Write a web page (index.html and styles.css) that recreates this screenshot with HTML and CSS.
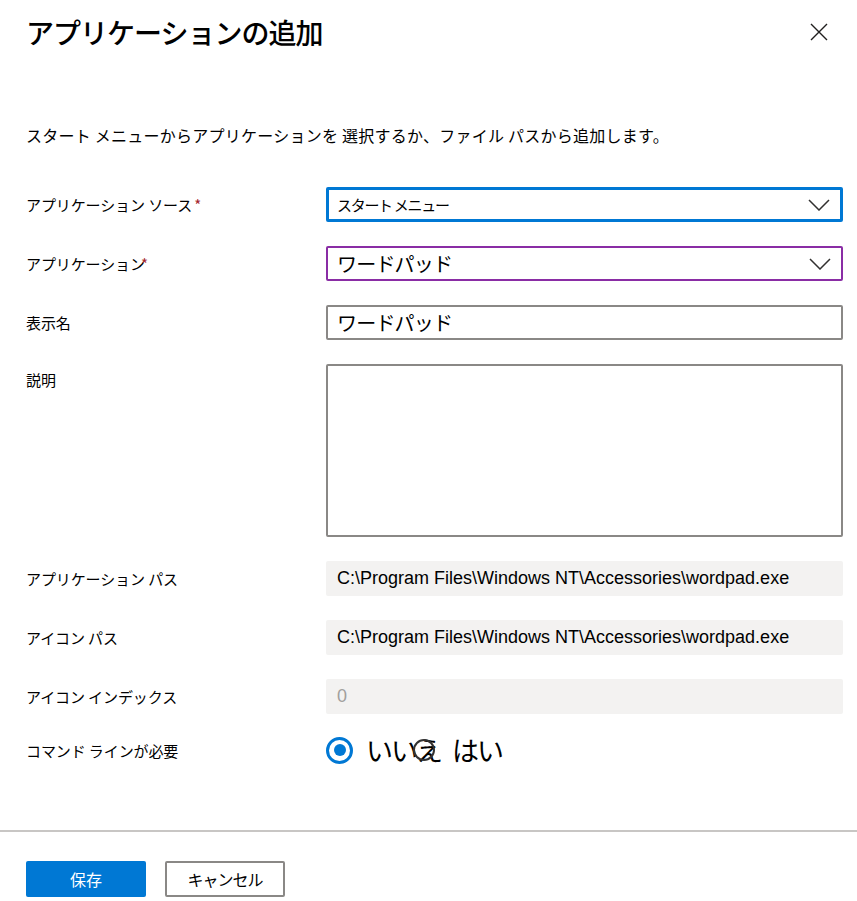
FILE: index.html
```html
<!DOCTYPE html>
<html lang="ja">
<head>
<meta charset="utf-8">
<title>アプリケーションの追加</title>
<link rel="stylesheet" href="styles.css">
</head>
<body>
<div class="panel">
  <header class="header">
    <h1 class="title">アプリケーションの追加</h1>
    <button class="close" aria-label="閉じる">
      <svg width="20" height="20" viewBox="0 0 20 20"><path d="M2 2 L18 18 M18 2 L2 18" stroke="#201f1e" stroke-width="1.4" fill="none"/></svg>
    </button>
  </header>
  <p class="desc">スタート メニューからアプリケーションを 選択するか、ファイル パスから追加します。</p>
  <div class="form">
    <div class="label">アプリケーション ソース<span class="req">*</span></div>
    <div class="field select focused">
      <span class="small">スタート メニュー</span>
      <svg class="chev" width="22" height="12" viewBox="0 0 22 12"><path d="M1 1 L11 11 L21 1" stroke="#323130" stroke-width="1.5" fill="none"/></svg>
    </div>

    <div class="label">アプリケーション<span class="req tight">*</span></div>
    <div class="field select hovered">
      <span class="big">ワードパッド</span>
      <svg class="chev" width="22" height="12" viewBox="0 0 22 12"><path d="M1 1 L11 11 L21 1" stroke="#323130" stroke-width="1.5" fill="none"/></svg>
    </div>

    <div class="label">表示名</div>
    <div class="field plain"><span class="big">ワードパッド</span></div>

    <div class="label top">説明</div>
    <div class="field textarea"></div>

    <div class="label">アプリケーション パス</div>
    <div class="field readonly"><span class="path">C:\Program Files\Windows NT\Accessories\wordpad.exe</span></div>

    <div class="label">アイコン パス</div>
    <div class="field readonly"><span class="path">C:\Program Files\Windows NT\Accessories\wordpad.exe</span></div>

    <div class="label">アイコン インデックス</div>
    <div class="field readonly"><span class="path dim">0</span></div>

    <div class="label">コマンド ラインが必要</div>
    <div class="radios">
      <span class="radio on"></span>
      <span class="opt">いいえ<span class="radio ghost"></span></span>
      <span class="opt">はい</span>
    </div>
  </div>
  <footer class="footer">
    <button class="btn primary">保存</button>
    <button class="btn secondary">キャンセル</button>
  </footer>
</div>
</body>
</html>
```
FILE: styles.css
```css
html, body {
  margin: 0;
  padding: 0;
  background: #ffffff;
}
body {
  font-family: "Noto Sans CJK JP", "Noto Sans", sans-serif;
  color: #201f1e;
}
.panel {
  width: 857px;
  height: 901px;
  display: flex;
  flex-direction: column;
}
.header {
  display: flex;
  justify-content: space-between;
  align-items: center;
  padding: 12px 26px 0 26px;
  height: 40px;
}
.title {
  margin: 0;
  font-size: 28px;
  font-weight: 500;
  letter-spacing: -1px;
  line-height: 40px;
  color: #000;
}
.close {
  border: none;
  background: none;
  padding: 0;
  width: 20px;
  height: 20px;
  margin-right: 2px;
  display: flex;
}
.desc {
  margin: 71px 0 0 26px;
  font-size: 16px;
  line-height: 24px;
  letter-spacing: 0.25px;
  color: #000;
}
.form {
  margin: 40px 14px 0 26px;
  display: grid;
  grid-template-columns: 300px 517px;
  row-gap: 24px;
  align-items: center;
}
.label {
  font-size: 15px;
  line-height: 20px;
  letter-spacing: -0.1px;
  color: #000;
}
.label.top {
  align-self: start;
  padding-top: 6px;
}
.req {
  color: #a4262c;
  margin-left: 2px;
}
.req.tight {
  margin-left: -4px;
}
.field {
  box-sizing: border-box;
  height: 35px;
  border-radius: 2px;
  display: flex;
  align-items: center;
  padding: 0 9px;
  position: relative;
}
.select { justify-content: space-between; }
.focused { border: 3px solid #0078d4; padding-left: 8px; }
.hovered { border: 2px solid #8a2da5; }
.plain { border: 2px solid #8a8886; }
.textarea {
  height: 173px;
  border: 2px solid #8a8886;
}
.readonly {
  background: #f3f2f1;
  padding-left: 11px;
}
.small {
  font-size: 15px;
  letter-spacing: -1.3px;
  color: #000;
}
.big {
  font-size: 20px;
  color: #000;
  letter-spacing: -0.8px;
}
.chev { margin-right: 1px; }
.path {
  font-family: "Liberation Sans", Arial, sans-serif;
  font-size: 18px;
  color: #000;
}
.path.dim { color: #a19f9d; }
.radios {
  display: flex;
  align-items: center;
  height: 28px;
  margin-top: -2px;
}
.radio {
  box-sizing: border-box;
  display: inline-block;
  width: 27px;
  height: 27px;
  border-radius: 50%;
  border: 3px solid #0078d4;
  position: relative;
  margin-right: 13px;
}
.radio.on::after {
  content: "";
  position: absolute;
  left: 4.5px;
  top: 4.5px;
  width: 12px;
  height: 12px;
  border-radius: 50%;
  background: #0078d4;
}
.opt {
  font-size: 27px;
  line-height: 32px;
  color: #000;
  position: relative;
  margin-right: 11px;
  letter-spacing: -2px;
}
.radio.ghost {
  position: absolute;
  left: 47px;
  top: 5px;
  width: 22px;
  height: 22px;
  border: 2px solid #323130;
  margin: 0;
}
.footer {
  margin-top: auto;
  border-top: 2px solid #c8c6c4;
  padding: 29px 26px 4px 26px;
  display: flex;
  gap: 19px;
}
.btn {
  box-sizing: border-box;
  width: 120px;
  height: 36px;
  border-radius: 2px;
  font-family: "Noto Sans CJK JP", sans-serif;
  font-size: 16px;
  padding: 0;
}
.primary {
  background: #0078d4;
  border: none;
  color: #fff;
}
.secondary {
  background: #fff;
  border: 2px solid #8a8886;
  color: #000;
  letter-spacing: -1px;
}
```
